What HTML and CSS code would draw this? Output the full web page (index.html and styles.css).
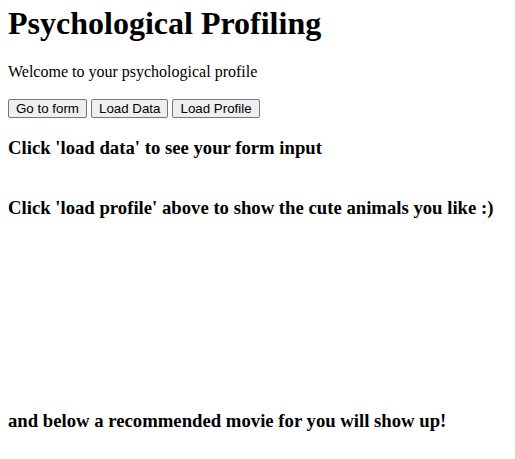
FILE: index.html
```html
<!DOCTYPE html>
<html>
<head>
<meta charset="utf-8">
<title>Psychological Profiling</title>
<link rel="stylesheet" href="styles.css">
</head>
<body>
<h1 class="title">Psychological Profiling</h1>
<p class="intro">Welcome to your psychological profile</p>
<div class="actions">
<button class="btn">Go to form</button>
<button class="btn">Load Data</button>
<button class="btn">Load Profile</button>
</div>
<h3 class="note">Click 'load data' to see your form input</h3>
<div class="data-area"></div>
<h3 class="note">Click 'load profile' above to show the cute animals you like :)</h3>
<div class="animals-area"></div>
<h3 class="note">and below a recommended movie for you will show up!</h3>
</body>
</html>
```
FILE: styles.css
```css
html, body {
  background: #fff;
}
body {
  margin: 5px 8px 8px;
  font-family: "Liberation Serif", "Times New Roman", serif;
  color: #000;
}
.title {
  font-size: 32px;
  font-weight: bold;
  margin: 0 0 21.44px;
}
.intro {
  font-size: 16px;
  margin: 16px 0 18px;
}
.actions {
  display: block;
}
.btn {
  font-family: "Liberation Sans", Arial, sans-serif;
  font-size: 13.333px;
  padding: 1px 7px;
  border: 1px solid #767676;
  border-radius: 2px;
  background: #efefef;
  color: #000;
}
.note {
  font-size: 18.72px;
  font-weight: bold;
  margin: 18.72px 0;
}
.data-area {
  display: flow-root;
  height: 0;
}
.animals-area {
  height: 154px;
}
```
